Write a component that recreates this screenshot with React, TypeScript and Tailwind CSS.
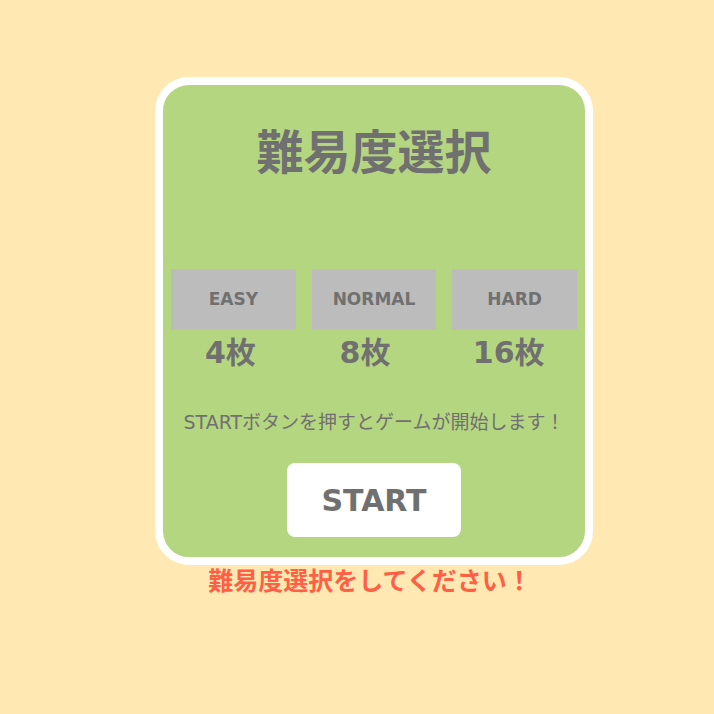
const font = { fontFamily: '"DejaVu Sans", "Noto Sans CJK JP", sans-serif' };

const levels = [
  { name: "EASY", count: "4枚", shift: "pr-[6px]" },
  { name: "NORMAL", count: "8枚", shift: "pr-[18px]" },
  { name: "HARD", count: "16枚", shift: "pr-[12px]" },
];

export default function App() {
  return (
    <div className="flex min-h-[714px] w-full flex-col items-center bg-[#ffe8b2] pt-[77px]" style={font}>
      <div className="ml-[34px] w-[438px] rounded-[34px] border-[8px] border-white bg-[#b5d680] px-[8px] pb-[20px] pt-[40px]">
        <h1 className="text-center text-[47px] font-bold leading-[56px] text-[#707070]">難易度選択</h1>

        <div className="mt-[88px] grid grid-cols-3 gap-[16px]">
          {levels.map((l) => (
            <div key={l.name} className="flex flex-col items-center">
              <button
                type="button"
                className="h-[61px] w-full bg-[#bcbcbc] text-[17px] font-bold text-[#707070]"
              >
                {l.name}
              </button>
              <div className={`mt-[5px] text-[30px] font-bold leading-[36px] text-[#707070] ${l.shift}`}>{l.count}</div>
            </div>
          ))}
        </div>

        <p className="mt-[38px] text-center text-[19px] leading-[26px] text-[#707070]">
          STARTボタンを押すとゲームが開始します！
        </p>

        <div className="mt-[28px] flex justify-center">
          <button
            type="button"
            className="h-[74px] w-[174px] rounded-[8px] bg-white text-[30px] font-bold text-[#707070]"
          >
            START
          </button>
        </div>
      </div>

      <p className="ml-[26px] mt-[1px] text-[25px] font-bold leading-[32px] text-[#ff5f45]">難易度選択をしてください！</p>
    </div>
  );
}
